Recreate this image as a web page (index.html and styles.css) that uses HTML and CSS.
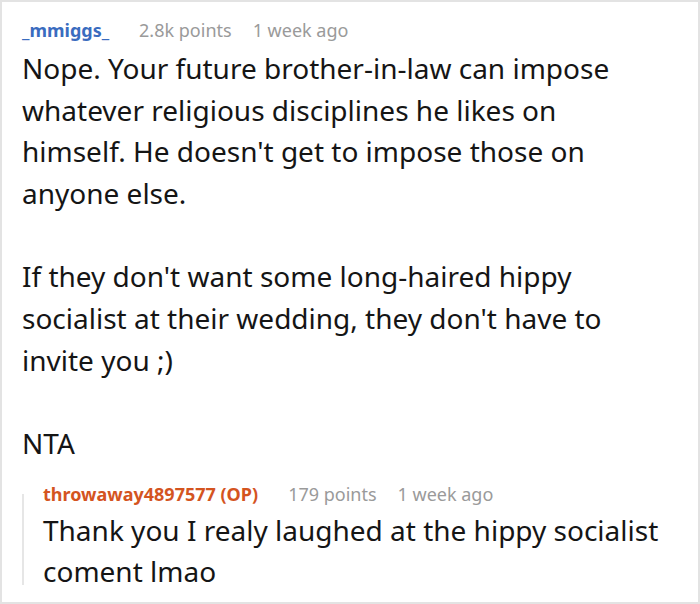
FILE: index.html
```html
<!DOCTYPE html>
<html>
<head>
<meta charset="utf-8">
<link rel="stylesheet" href="styles.css">
</head>
<body>
<div class="frame">
  <div class="comment">
    <div class="meta">
      <span class="user">_mmiggs_</span>
      <span class="info">2.8k points</span>
      <span class="info">1 week ago</span>
    </div>
    <div class="body">
      <p>Nope. Your future brother-in-law can impose whatever religious disciplines he likes on himself. He doesn't get to impose those on anyone else.</p>
      <p>If they don't want some long-haired hippy socialist at their wedding, they don't have to invite you ;)</p>
      <p>NTA</p>
    </div>
    <div class="reply">
      <div class="meta">
        <span class="user op">throwaway4897577 (OP)</span>
        <span class="info">179 points</span>
        <span class="info">1 week ago</span>
      </div>
      <div class="body">
        <p>Thank you I realy laughed at the hippy socialist coment lmao</p>
      </div>
    </div>
  </div>
</div>
</body>
</html>
```
FILE: styles.css
```css
html, body {
  margin: 0;
  padding: 0;
  background: #fff;
}
.frame {
  width: 700px;
  height: 604px;
  box-sizing: border-box;
  border: 2px solid #e3e3e3;
  overflow: hidden;
  font-family: "Noto Sans", "Open Sans", sans-serif;
}
.comment {
  padding: 16px 34px 0 20px;
}
.meta {
  display: flex;
  align-items: baseline;
  gap: 21px;
  font-size: 18px;
  line-height: 24px;
}
.user {
  font-weight: bold;
  color: #3a6cbf;
  margin-right: 9px;
}
.user.op {
  color: #d4541f;
}
.info {
  color: #9a9a9a;
}
.body {
  font-size: 28px;
  line-height: 41.67px;
  color: #151515;
  margin-top: 6px;
}
.body p {
  margin: 0 0 41.67px 0;
}
.body p:last-child {
  margin-bottom: 0;
}
.reply {
  position: relative;
  margin-top: 17px;
  padding-left: 21px;
}
.reply::before {
  content: "";
  position: absolute;
  left: 0;
  top: 12px;
  bottom: 8px;
  width: 2px;
  background: #e6e6e6;
}
.reply .body {
  margin-top: 4px;
}
```
